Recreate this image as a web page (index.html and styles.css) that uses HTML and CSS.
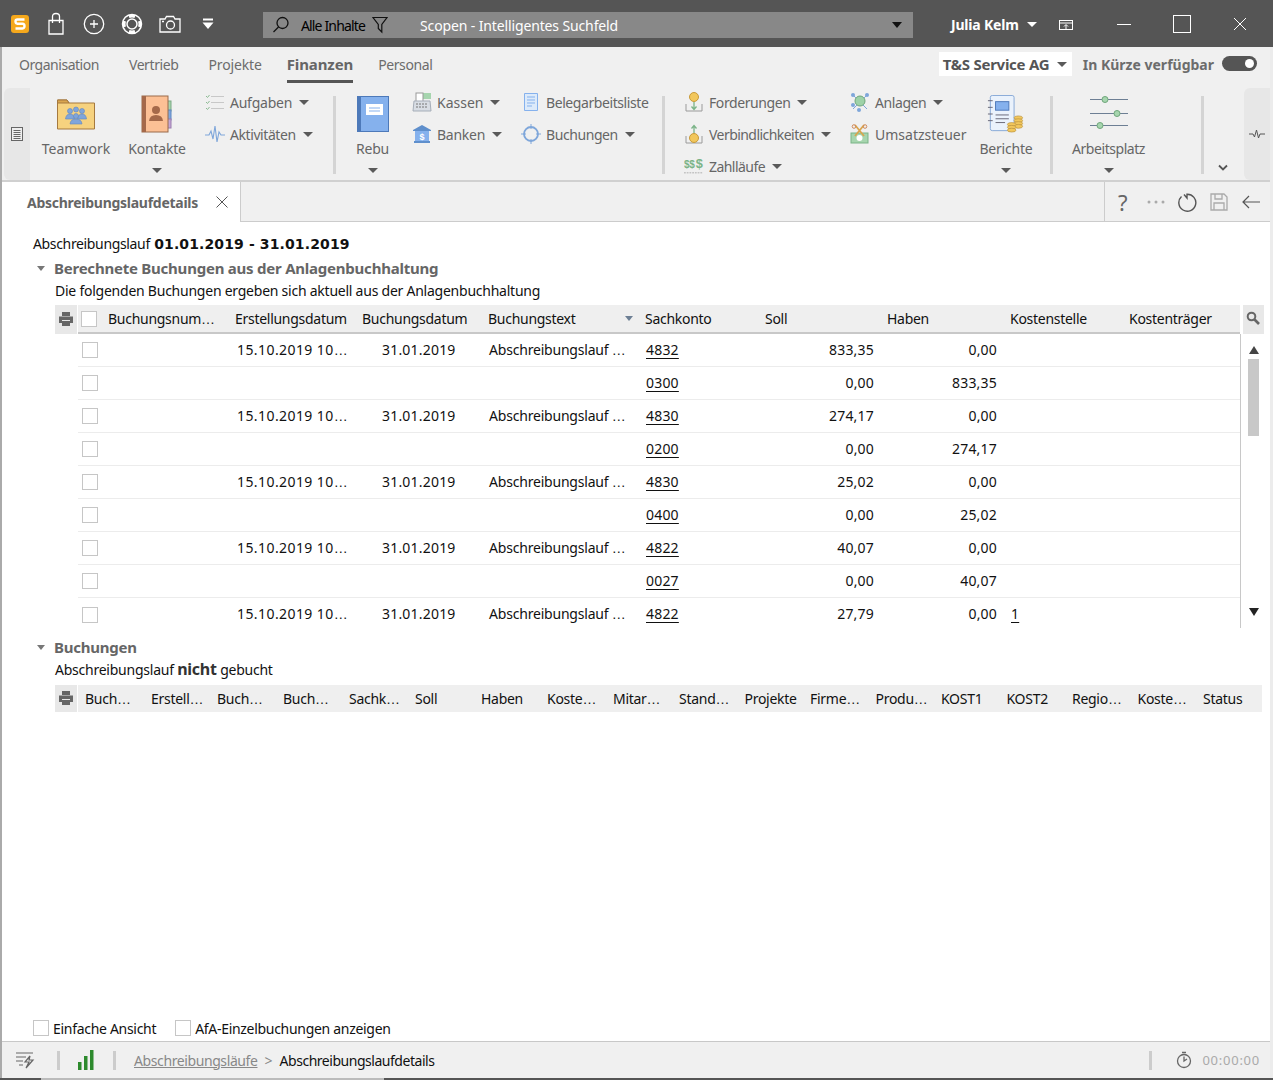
FILE: index.html
```html
<!DOCTYPE html>
<html lang="de">
<head>
<meta charset="utf-8">
<title>Abschreibungslaufdetails</title>
<link rel="stylesheet" href="styles.css">
</head>
<body>
<div class="window">
  <header class="titlebar">
    <div class="qa">
      <svg class="qa-logo" width="20" height="20" viewBox="0 0 20 20"><rect x="1" y="1" width="18" height="18" rx="3" fill="#f5a81c"/><path d="M14.5 5.5H7.5Q5.5 5.5 5.5 7.5T7.5 9.7H12.5Q14.5 9.7 14.5 12T12.500 14.500H5.500" fill="none" stroke="#fff" stroke-width="2.400"/></svg>
      <svg width="20" height="24" viewBox="0 0 20 24" fill="none" stroke="#fff" stroke-width="1.300"><path d="M3 8.500H17V22H3Z"/><path d="M6.500 11V4.500Q6.500 1.500 10 1.500T13.500 4.500V11"/></svg>
      <svg width="24" height="24" viewBox="0 0 24 24" fill="none" stroke="#fff" stroke-width="1.300"><circle cx="12" cy="12" r="9.700"/><path d="M12 8V16M8 12H16"/></svg>
      <svg width="24" height="24" viewBox="0 0 24 24" fill="none" stroke="#fff" stroke-width="1.500"><circle cx="12" cy="12" r="9.500"/><circle cx="12" cy="12" r="5"/><path d="M9 4.500Q12 3.500 15 4.500M9 19.500Q12 20.500 15 19.500M4.500 9Q3.500 12 4.500 15M19.500 9Q20.500 12 19.500 15" stroke-width="3"/></svg>
      <svg width="24" height="20" viewBox="0 0 24 20" fill="none" stroke="#fff" stroke-width="1.300"><path d="M2 5H7L8.500 2.500H15.500L17 5H22V18H2Z"/><circle cx="12.500" cy="11" r="4"/><path d="M4 7.500H6"/></svg>
      <svg width="14" height="14" viewBox="0 0 14 14" fill="#fff"><path d="M2 1.500H12V3.500H2Z"/><path d="M1.500 5.500H12.500L7 12Z"/></svg>
    </div>
    <div class="search">
      <svg class="search-icon" width="18" height="18" viewBox="0 0 18 18" fill="none" stroke="#111" stroke-width="1.300"><circle cx="10.500" cy="7" r="5.500"/><path d="M6.500 11L1.500 16"/></svg>
      <span class="search-scope">Alle Inhalte</span>
      <svg class="search-filter" width="16" height="18" viewBox="0 0 16 18" fill="none" stroke="#111" stroke-width="1.200"><path d="M1 1.500H15L9.800 8.500V16L6.300 12.500V8.500Z"/></svg>
      <span class="search-text">Scopen - Intelligentes Suchfeld</span>
      <span class="caret caret-dark search-caret"></span>
    </div>
    <div class="user">Julia Kelm <span class="caret caret-white"></span></div>
    <svg class="user-box" width="16" height="14" viewBox="0 0 16 14" fill="none" stroke="#fff"><rect x="1.500" y="2.500" width="13" height="9"/><path d="M1.500 5H14.500M8 11V7M6 8.500L8 6.500L10 8.500"/></svg>
    <div class="winbtns">
      <svg width="14" height="14" viewBox="0 0 14 14" stroke="#fff" fill="none"><path d="M0 7.500H14"/></svg>
      <svg width="18" height="18" viewBox="0 0 18 18" stroke="#fff" fill="none"><rect x="0.500" y="0.500" width="17" height="17"/></svg>
      <svg width="14" height="14" viewBox="0 0 14 14" stroke="#fff" fill="none"><path d="M1 1L13 13M13 1L1 13"/></svg>
    </div>
  </header>

  <div class="body">
    <nav class="tabs">
      <span class="tab tab-org">Organisation</span>
      <span class="tab">Vertrieb</span>
      <span class="tab tab-proj">Projekte</span>
      <span class="tab tab-active">Finanzen</span>
      <span class="tab">Personal</span>
      <span class="tabs-spacer"></span>
      <span class="company">T&amp;S Service AG <span class="caret caret-gray"></span></span>
      <span class="soon">In Kürze verfügbar</span>
      <span class="toggle"></span>
    </nav>

    <section class="ribbon">
      <div class="panel panel-left">
        <svg width="14" height="16" viewBox="0 0 14 16" fill="none" stroke="#666"><rect x="1.500" y="1.500" width="11" height="13" fill="#eee"/><path d="M3.500 4.500H10.500M3.500 6.500H10.500M3.500 8.500H10.500M3.500 10.500H10.500M3.500 12.500H10.500"/></svg>
      </div>

      <div class="big w-team">
        <svg width="38" height="32" viewBox="0 0 38 32"><path d="M0.500 2H10L12 5H37.500V31H0.500Z" fill="#f6d27f" stroke="#a5793f"/><path d="M0.500 2H10L12 5H0.500Z" fill="#d9a54e" stroke="#a5793f"/><g fill="#7fa5db" stroke="#5f86c0" stroke-width=".6"><circle cx="13" cy="13" r="2.500"/><circle cx="19" cy="11.500" r="2.500"/><circle cx="25" cy="13" r="2.500"/><path d="M8.500 21Q9 16 13 16T17.500 21Z"/><path d="M20.500 21Q21 16 25 16T29.500 21Z"/><circle cx="19" cy="18" r="2.500"/><path d="M13 26Q13.500 21 19 21T25 26Z"/></g></svg>
        <span class="big-label">Teamwork</span>
      </div>
      <div class="big w-kont">
        <svg width="32" height="36" viewBox="0 0 32 36"><rect x="26" y="5" width="4" height="10" fill="#a6d5ae" stroke="#7aa883"/><rect x="26" y="14" width="4" height="10" fill="#7fa8df" stroke="#5f86c0"/><rect x="26" y="23" width="4" height="9" fill="#c3a6d6" stroke="#9a7cae"/><rect x="1" y="0" width="26" height="36" fill="#fcc095" stroke="#9a6a4a"/><rect x="1" y="0" width="4" height="36" fill="#a5694a"/><circle cx="15" cy="14" r="4" fill="#a5694a"/><path d="M8 25Q8.500 19 15 19T22 25Z" fill="#a5694a"/></svg>
        <span class="big-label">Kontakte</span>
        <span class="caret caret-gray big-caret"></span>
      </div>
      <div class="col w-auf">
        <div class="small"><svg width="20" height="18" viewBox="0 0 20 18" fill="none" stroke="#c8c8c8"><path d="M6 3.500H19M6 9.500H19M6 15.500H19"/><path d="M1 3L2.500 4.500L4.500 2M1 9L2.500 10.500L4.500 8M1 15L2.500 16.500L4.500 14" stroke="#8dbb94"/></svg><span>Aufgaben</span><span class="caret caret-gray"></span></div>
        <div class="small"><svg width="20" height="20" viewBox="0 0 20 20" fill="none" stroke="#7ea6da" stroke-width="1.100"><path d="M0 11H4L6 7L8 15L10 2L12 18L14 8L16 11H20"/></svg><span class="tight">Aktivitäten</span><span class="caret caret-gray"></span></div>
      </div>
      <i class="sep s1"></i>
      <div class="big w-rebu">
        <svg width="32" height="36" viewBox="0 0 32 36"><rect x="0.500" y="0.500" width="31" height="35" fill="#85b1ed" stroke="#4d79b9"/><rect x="0" y="0" width="4" height="36" fill="#4d79b9"/><rect x="9" y="8" width="17" height="11" fill="#fff"/><path d="M12 12H23M12 15H23" stroke="#85b1ed"/></svg>
        <span class="big-label">Rebu</span>
        <span class="caret caret-gray big-caret"></span>
      </div>
      <div class="col w-kassen">
        <div class="small"><svg width="20" height="20" viewBox="0 0 20 20"><rect x="9" y="1" width="10" height="6" fill="#a6d5ae"/><rect x="4" y="1" width="7" height="9" fill="#fff" stroke="#999"/><path d="M2 9H18L19 19H1Z" fill="#d8dde4" stroke="#a5adb8"/><path d="M4 12H16M4 15H16" stroke="#777" stroke-dasharray="2 1"/></svg><span class="loose">Kassen</span><span class="caret caret-gray"></span></div>
        <div class="small"><svg width="20" height="20" viewBox="0 0 20 20"><path d="M1 6L10 1L19 6V7H1Z" fill="#5f8fcc"/><rect x="3" y="7" width="14" height="10" fill="#85b1ed"/><rect x="2" y="17" width="16" height="2" fill="#5f8fcc"/><text x="10" y="15.500" class="dollar">$</text></svg><span>Banken</span><span class="caret caret-gray"></span></div>
      </div>
      <div class="col w-beleg">
        <div class="small"><svg width="16" height="20" viewBox="0 0 16 20" fill="#dceafa" stroke="#85b1ed"><path d="M1.500 1.500H14.500V18.500H1.500Z"/><path d="M4 5H12M4 8H12M4 11H12M4 14H9"/></svg><span class="tight">Belegarbeitsliste</span></div>
        <div class="small"><svg width="20" height="20" viewBox="0 0 20 20" fill="none" stroke="#7ea6da"><circle cx="10" cy="10" r="7" stroke-width="1.800"/><path d="M10 0V5M10 15V20M0 10H5M15 10H20"/></svg><span class="tight">Buchungen</span><span class="caret caret-gray"></span></div>
      </div>
      <i class="sep s2"></i>
      <div class="col w-ford">
        <div class="small"><svg width="20" height="20" viewBox="0 0 20 20"><path d="M2 12V19H18V12" fill="none" stroke="#9a9a9a"/><circle cx="10" cy="5" r="4.500" fill="#f2c75c" stroke="#c89a3a"/><path d="M10 10V17M7.500 14.500L10 17.500L12.500 14.500" fill="none" stroke="#7ab387" stroke-width="1.300"/></svg><span class="tight">Forderungen</span><span class="caret caret-gray"></span></div>
        <div class="small"><svg width="20" height="20" viewBox="0 0 20 20"><path d="M2 12V19H18V12" fill="none" stroke="#9a9a9a"/><circle cx="10" cy="14" r="4.500" fill="#f2c75c" stroke="#c89a3a"/><path d="M10 9V2M7.500 4.500L10 1.500L12.500 4.500" fill="none" stroke="#7ab387" stroke-width="1.300"/></svg><span class="tighter">Verbindlichkeiten</span><span class="caret caret-gray"></span></div>
        <div class="small"><svg width="22" height="20" viewBox="0 0 22 20"><text x="0" y="12" class="dollars">$$</text><text x="13" y="12" class="dollars dollar-big">$</text><path d="M0 17.500H20" stroke="#aaa" stroke-dasharray="2 1"/></svg><span class="tighter">Zahlläufe</span><span class="caret caret-gray"></span></div>
      </div>
      <div class="col w-anl">
        <div class="small"><svg width="20" height="20" viewBox="0 0 20 20"><path d="M3 3L17 17M17 3L3 17" stroke="#7ea6da"/><circle cx="3" cy="3" r="2" fill="#7ea6da"/><circle cx="17" cy="3" r="2" fill="#7ea6da"/><circle cx="3" cy="13" r="2" fill="#7ea6da"/><circle cx="9" cy="18" r="2" fill="#7ea6da"/><circle cx="10" cy="9" r="5" fill="#9ed2a8" stroke="#6fa67b"/></svg><span class="tight">Anlagen</span><span class="caret caret-gray"></span></div>
        <div class="small"><svg width="20" height="20" viewBox="0 0 20 20"><rect x="1" y="9" width="17" height="10" fill="#a6d5ae" stroke="#7ab387"/><circle cx="9.500" cy="14" r="3" fill="#fff"/><path d="M5 1L14 12M14 1L5 12" stroke="#d9a54e" stroke-width="1.800"/><circle cx="4" cy="2.500" r="1.800" fill="none" stroke="#d08a5a"/><circle cx="15" cy="2.500" r="1.800" fill="none" stroke="#d08a5a"/></svg><span class="loose">Umsatzsteuer</span></div>
      </div>
      <div class="big w-ber">
        <svg width="38" height="40" viewBox="0 0 38 40"><rect x="2.500" y="0.500" width="25" height="37" rx="2" fill="#eaf2fc" stroke="#85a8d6"/><rect x="8" y="7" width="14" height="9" fill="#85b1ed" stroke="#4d79b9"/><path d="M0 6H5M0 13H5M0 20H5M0 27H5M8 21H22M8 25H22M8 29H18" stroke="#667"/><g fill="#f2c75c" stroke="#b8913f" stroke-width=".7"><ellipse cx="32" cy="24" rx="4.500" ry="2"/><ellipse cx="32" cy="27" rx="4.500" ry="2"/><ellipse cx="32" cy="30" rx="4.500" ry="2"/><ellipse cx="32" cy="33" rx="4.500" ry="2"/><ellipse cx="25" cy="31" rx="4.500" ry="2"/><ellipse cx="25" cy="34" rx="4.500" ry="2"/><ellipse cx="25" cy="37" rx="4.500" ry="2"/></g></svg>
        <span class="big-label">Berichte</span>
        <span class="caret caret-gray big-caret"></span>
      </div>
      <i class="sep s3"></i>
      <div class="big w-arb">
        <svg width="38" height="36" viewBox="0 0 38 36"><path d="M0 3.500H38M0 17.500H38M0 29.500H38" stroke="#6d7f94"/><circle cx="15" cy="3.500" r="3" fill="#a6d5ae" stroke="#6fa67b"/><circle cx="27" cy="17.500" r="3" fill="#a6d5ae" stroke="#6fa67b"/><circle cx="10" cy="29.500" r="3" fill="#a6d5ae" stroke="#6fa67b"/></svg>
        <span class="big-label">Arbeitsplatz</span>
        <span class="caret caret-gray big-caret"></span>
      </div>
      <i class="sep s4"></i>
      <div class="chev"><svg width="10" height="8" viewBox="0 0 10 8" fill="none" stroke="#555" stroke-width="1.800"><path d="M1 1.500L5 5.500L9 1.500"/></svg></div>
      <div class="panel panel-right">
        <svg width="16" height="10" viewBox="0 0 16 10" fill="none" stroke="#555"><path d="M0 5H4L5.500 8L7.500 1L9.500 9L11 5H16"/></svg>
      </div>
    </section>

    <div class="doc-tabs">
      <div class="doc-tab">
        <span>Abschreibungslaufdetails</span>
        <svg width="12" height="12" viewBox="0 0 12 12" stroke="#555" fill="none"><path d="M0.500 0.500L11.500 11.500M11.500 0.500L0.500 11.500"/></svg>
      </div>
      <div class="doc-rest">
        <div class="doc-tools">
          <span class="help">?</span>
          <svg width="18" height="4" viewBox="0 0 18 4" fill="#aaa"><circle cx="2" cy="2" r="1.500"/><circle cx="9" cy="2" r="1.500"/><circle cx="16" cy="2" r="1.500"/></svg>
          <svg width="20" height="20" viewBox="0 0 20 20" fill="none" stroke="#555" stroke-width="1.400"><path d="M6 2.500L9 6V2.200A8.500 8.500 0 1 1 3.500 4.500"/></svg>
          <svg width="18" height="18" viewBox="0 0 18 18" fill="none" stroke="#aaa" stroke-width="1.300"><path d="M1 1H14L17 4V17H1Z"/><path d="M5 1V6H12V1M4 17V10H14V17"/></svg>
          <svg width="18" height="14" viewBox="0 0 18 14" fill="none" stroke="#555" stroke-width="1.200"><path d="M18 7H1M7 1L1 7L7 13"/></svg>
        </div>
      </div>
    </div>

    <main class="content">
      <h1 class="run-title">Abschreibungslauf <b>01.01.2019 - 31.01.2019</b></h1>

      <h2 class="sec-title sec-first"><span class="sec-tri"></span>Berechnete Buchungen aus der Anlagenbuchhaltung</h2>
      <p class="sec-note">Die folgenden Buchungen ergeben sich aktuell aus der Anlagenbuchhaltung</p>

      <div class="grid-head">
        <div class="print-cell"><svg class="print" width="16" height="16" viewBox="0 0 16 16" fill="#666"><rect x="4" y="1" width="8" height="4"/><path d="M1 5.500H15V12H12V9H4V12H1Z"/><rect x="4" y="10" width="8" height="5"/></svg></div>
        <div class="head-main cols">
          <span><i class="check check-h"></i></span><span>Buchungsnum<em class="e">…</em></span><span>Erstellungsdatum</span><span>Buchungsdatum</span><span class="sort">Buchungstext<i class="sort-tri"></i></span><span>Sachkonto</span><span>Soll</span><span>Haben</span><span>Kostenstelle</span><span>Kostenträger</span>
        </div>
        <div class="find-cell"><svg width="14" height="14" viewBox="0 0 14 14" fill="none" stroke="#666" stroke-width="2"><circle cx="5.500" cy="5.500" r="3.800"/><path d="M8.500 8.500L13 13" stroke-width="2.600"/></svg></div>
      </div>

      <div class="grid-wrap">
        <div class="rows">
          <div class="row cols"><span><i class="check"></i></span><span></span><span class="c-d">15.10.2019 10<em class="e">…</em></span><span class="c-b">31.01.2019</span><span class="c-t">Abschreibungslauf <em class="e">…</em></span><span class="c-l"><a>4832</a></span><span class="num">833,35</span><span class="num">0,00</span><span></span><span></span></div>
          <div class="row cols"><span><i class="check"></i></span><span></span><span></span><span></span><span></span><span class="c-l"><a>0300</a></span><span class="num">0,00</span><span class="num">833,35</span><span></span><span></span></div>
          <div class="row cols"><span><i class="check"></i></span><span></span><span class="c-d">15.10.2019 10<em class="e">…</em></span><span class="c-b">31.01.2019</span><span class="c-t">Abschreibungslauf <em class="e">…</em></span><span class="c-l"><a>4830</a></span><span class="num">274,17</span><span class="num">0,00</span><span></span><span></span></div>
          <div class="row cols"><span><i class="check"></i></span><span></span><span></span><span></span><span></span><span class="c-l"><a>0200</a></span><span class="num">0,00</span><span class="num">274,17</span><span></span><span></span></div>
          <div class="row cols"><span><i class="check"></i></span><span></span><span class="c-d">15.10.2019 10<em class="e">…</em></span><span class="c-b">31.01.2019</span><span class="c-t">Abschreibungslauf <em class="e">…</em></span><span class="c-l"><a>4830</a></span><span class="num">25,02</span><span class="num">0,00</span><span></span><span></span></div>
          <div class="row cols"><span><i class="check"></i></span><span></span><span></span><span></span><span></span><span class="c-l"><a>0400</a></span><span class="num">0,00</span><span class="num">25,02</span><span></span><span></span></div>
          <div class="row cols"><span><i class="check"></i></span><span></span><span class="c-d">15.10.2019 10<em class="e">…</em></span><span class="c-b">31.01.2019</span><span class="c-t">Abschreibungslauf <em class="e">…</em></span><span class="c-l"><a>4822</a></span><span class="num">40,07</span><span class="num">0,00</span><span></span><span></span></div>
          <div class="row cols"><span><i class="check"></i></span><span></span><span></span><span></span><span></span><span class="c-l"><a>0027</a></span><span class="num">0,00</span><span class="num">40,07</span><span></span><span></span></div>
          <div class="row row-last cols"><span><i class="check"></i></span><span></span><span class="c-d">15.10.2019 10<em class="e">…</em></span><span class="c-b">31.01.2019</span><span class="c-t">Abschreibungslauf <em class="e">…</em></span><span class="c-l"><a>4822</a></span><span class="num">27,79</span><span class="num">0,00</span><span class="c-l"><a>1</a></span><span></span></div>
        </div>
        <div class="scroll">
          <i class="arrow arrow-up"></i>
          <i class="thumb"></i>
          <i class="arrow arrow-down"></i>
        </div>
      </div>

      <h2 class="sec-title sec-second"><span class="sec-tri"></span>Buchungen</h2>
      <p class="sec-note">Abschreibungslauf <b>nicht</b> gebucht</p>

      <div class="grid-head grid-head2">
        <div class="print-cell"><svg class="print" width="16" height="16" viewBox="0 0 16 16" fill="#666"><rect x="4" y="1" width="8" height="4"/><path d="M1 5.500H15V12H12V9H4V12H1Z"/><rect x="4" y="10" width="8" height="5"/></svg></div>
        <div class="head-main cols2">
          <span>Buch<em class="e">…</em></span><span>Erstell<em class="e">…</em></span><span>Buch<em class="e">…</em></span><span>Buch<em class="e">…</em></span><span>Sachk<em class="e">…</em></span><span>Soll</span><span>Haben</span><span>Koste<em class="e">…</em></span><span>Mitar<em class="e">…</em></span><span>Stand<em class="e">…</em></span><span>Projekte</span><span>Firme<em class="e">…</em></span><span>Produ<em class="e">…</em></span><span>KOST1</span><span>KOST2</span><span>Regio<em class="e">…</em></span><span>Koste<em class="e">…</em></span><span>Status</span>
        </div>
      </div>

      <div class="options">
        <label class="opt"><i class="check"></i>Einfache Ansicht</label>
        <label class="opt"><i class="check"></i>AfA-Einzelbuchungen anzeigen</label>
      </div>
    </main>

    <footer class="status">
      <svg width="20" height="18" viewBox="0 0 20 18" fill="none" stroke="#666" stroke-width="1.200"><path d="M1 2H18M1 6H11M1 10H8M4 14H8"/><path d="M15 5L10 11H14L11 17L18 9H14Z"/></svg>
      <i class="st-sep"></i>
      <svg class="st-bars" width="16" height="20" viewBox="0 0 16 20" fill="#2d8a2d"><rect x="0" y="12" width="3.500" height="8"/><rect x="6" y="6" width="3.500" height="14"/><rect x="12" y="0" width="3.500" height="20"/></svg>
      <i class="st-sep"></i>
      <a class="crumb">Abschreibungsläufe</a><span class="crumb-gt">&gt;</span><span class="crumb-cur">Abschreibungslaufdetails</span>
      <span class="st-spacer"></span>
      <i class="st-sep st-sep-r"></i>
      <svg width="16" height="18" viewBox="0 0 16 18" fill="none" stroke="#666" stroke-width="1.300"><circle cx="8" cy="10" r="6.500"/><path d="M6 1.500H10M8 5.500V10L11 8"/></svg>
      <span class="timer">00:00:00</span>
    </footer>
  </div>
  <div class="taskbar"><i class="task-light"></i></div>
</div>
</body>
</html>
```

FILE: styles.css
```css
* { box-sizing: border-box; }
html, body { margin: 0; padding: 0; }
body { font-family: "Noto Sans", "Liberation Sans", sans-serif; font-size: 14px; color: #111; background: #fff; overflow: hidden; }
.window { width: 1273px; height: 1080px; display: flex; flex-direction: column; }
i { display: block; font-style: normal; }
.e { font-family: "Liberation Sans", sans-serif; font-style: normal; letter-spacing: 0; }

.titlebar { height: 47px; background: #555; display: flex; align-items: center; flex: none; color: #fff; }
.qa { width: 263px; padding-left: 10px; display: flex; align-items: center; }
.qa svg { margin-right: 14px; }
.qa-logo { margin-right: 16px !important; }
.qa svg:nth-child(2) { margin-right: 16px; }
.qa svg:nth-child(5) { margin-right: 19px; }
.search { width: 650px; height: 26px; background: #888; display: flex; align-items: center; position: relative; margin-top: 2px; padding-top: 2px; }
.search-icon { margin-left: 9px; margin-top: -2px; }
.search-scope { color: #000; margin-left: 11px; letter-spacing: -.85px; }
.search-filter { margin-left: 7px; margin-top: -2px; }
.search-text { margin-left: 32px; color: #fff; letter-spacing: -.13px; }
.search-caret { margin-left: auto; margin-right: 11px; margin-top: -2px; }
.user { margin-left: 38px; font-weight: 700; letter-spacing: -.2px; display: flex; align-items: center; gap: 8px; width: 94px; white-space: nowrap; padding-top: 2px; }
.user-box { margin-left: 13px; margin-top: 2px; }
.winbtns { display: flex; align-items: center; margin-left: 43px; }
.winbtns svg:nth-child(2) { margin-left: 42px; }
.winbtns svg:nth-child(3) { margin-left: 42px; }

.caret { display: inline-block; width: 0; height: 0; border-left: 5px solid transparent; border-right: 5px solid transparent; border-top: 5px solid #555; }
.caret-dark { border-top-color: #111; border-left-width: 5.500px; border-right-width: 5.500px; border-top-width: 6px; }
.caret-white { border-top-color: #fff; }
.caret-gray { border-top-color: #5a5a5a; }

.body { flex: 1; min-height: 0; display: flex; flex-direction: column; border-left: 2px solid #aaa; border-right: 3px solid #ececec; }

.tabs { height: 40px; flex: none; background: #f0f0f0; display: flex; align-items: flex-start; padding-left: 17px; color: #6c6c6c; }
.tab { height: 36px; padding-top: 8px; margin-right: 30px; letter-spacing: -.4px; white-space: nowrap; }
.tab-org { letter-spacing: -.48px; }
.tab-proj { margin-right: 25px; letter-spacing: -.15px; }
.tab-active { font-size: 15px; padding-top: 7px; font-weight: 700; color: #666; border-bottom: 3px solid #555; margin-right: 25px; letter-spacing: -.1px; }
.tabs-spacer { flex: 1; }
.company { margin-top: 5px; height: 24px; width: 133px; background: #fff; font-size: 15px; font-weight: 700; color: #555; display: flex; align-items: center; padding-left: 4px; gap: 8px; letter-spacing: -.27px; white-space: nowrap; }
.soon { margin: 8px 0 0 11px; font-weight: 700; color: #6c6c6c; letter-spacing: 0; white-space: nowrap; }
.toggle { margin: 9px 13px 0 8px; width: 35px; height: 15px; border-radius: 8px; background: #555; position: relative; }
.toggle::after { content: ""; position: absolute; right: 3px; top: 3px; width: 9px; height: 9px; border-radius: 50%; background: #fff; }

.ribbon { height: 95px; flex: none; background: #f0f0f0; border-bottom: 2px solid #d0d0d0; display: flex; align-items: flex-start; color: #666; padding-left: 2px; }
.panel { width: 26px; height: 92px; background: #e7e7e7; display: flex; align-items: center; justify-content: center; flex: none; }
.panel-left { border-radius: 6px 0 0 6px; margin-top: 1px; }
.panel-right { width: 26px; border-radius: 6px 0 0 6px; margin-top: 1px; margin-left: auto; }
.big { display: flex; flex-direction: column; align-items: center; flex: none; padding-top: 8px; height: 92px; position: relative; }
.big svg { height: 38px; }
.big-label { position: absolute; top: 52px; letter-spacing: -.2px; white-space: nowrap; }
.big-caret { position: absolute; top: 81px; }
.w-team { width: 92px; margin-left: 0; }
.w-team .big-label { letter-spacing: 0; }
.w-kont { width: 70px; }
.col { flex: none; display: flex; flex-direction: column; margin-top: -1px; }
.small { height: 32px; display: flex; align-items: center; white-space: nowrap; letter-spacing: -.25px; }
.small svg { flex: none; width: 20px; margin-right: 5px; }
.small .caret { margin-left: 7px; }
.tight { letter-spacing: -.42px; }
.tighter { letter-spacing: -.55px; }
.loose { letter-spacing: 0; }
.w-auf { margin-left: 13px; width: 128px; }
.sep { width: 3px; height: 78px; background: #d4d4d4; margin-top: 9px; flex: none; }
.w-rebu { width: 71px; margin-left: 1px; }
.w-kassen { margin-left: 4px; width: 109px; }
.w-beleg { width: 141px; }
.w-ford { margin-left: 19px; width: 166px; }
.w-anl { width: 121px; }
.w-ber { width: 70px; }
.s3 { margin-left: 9px; }
.w-arb { width: 111px; margin-left: 0; }
.w-arb .big-label { letter-spacing: -.45px; }
.s4 { margin-left: 37px; }
.chev { margin: 70px 0 0 14px; }
.dollar { font: 700 9px "Liberation Sans", sans-serif; fill: #fff; text-anchor: middle; }
.dollars { font: 700 11px "Liberation Sans", sans-serif; fill: #7ab387; }
.dollar-big { font-size: 14px; }

.doc-tabs { height: 40px; flex: none; display: flex; background: #f0f0f0; }
.doc-tab { width: 239px; height: 40px; background: #fff; border-right: 1px solid #ccc; display: flex; align-items: center; padding-left: 25px; gap: 18px; font-weight: 700; color: #666; letter-spacing: -.27px; flex: none; }
.doc-rest { flex: 1; border-bottom: 1px solid #ccc; display: flex; justify-content: flex-end; align-items: center; }
.doc-tools { height: 39px; width: 166px; border-left: 1px solid #ccc; display: flex; align-items: center; padding-left: 13px; gap: 13px; }
.help { font-size: 22px; color: #666; font-weight: 400; line-height: 1; width: 14px; margin-right: 2px; }
.doc-tools svg:nth-child(3) { margin-right: -1px; }
.doc-tools svg:nth-child(4) { margin-right: 1px; }

.content { flex: 1; min-height: 0; background: #fff; padding: 11px 0 0 31px; display: flex; flex-direction: column; }
.run-title { margin: 0; font-size: 14px; font-weight: 400; line-height: 22px; letter-spacing: -.35px; }
.run-title b { font-size: 14px; font-family: "DejaVu Sans", sans-serif; letter-spacing: .12px; margin-left: 1px; }
.sec-title { font-size: 15px; font-weight: 700; color: #666; line-height: 20px; display: flex; align-items: center; letter-spacing: -.23px; }
.sec-first { margin: 3px 0 3px 4px; }
.sec-second { margin: 9px 0 2px 4px; }
.sec-tri { width: 0; height: 0; border-left: 4px solid transparent; border-right: 4px solid transparent; border-top: 5px solid #777; margin-right: 9px; }
.sec-note { margin: 0 0 0 22px; line-height: 20px; letter-spacing: -.24px; }
.sec-note b { font-size: 16px; color: #333; }

.grid-head { display: flex; height: 29px; margin: 4px 0 0 22px; }
.print-cell { width: 22px; background: #e8e8e8; display: flex; align-items: center; justify-content: center; flex: none; }
.print { margin-top: -2px; }
.head-main { margin-left: 1px; background: #efefef; align-items: center; letter-spacing: -.28px; }
.head-main.cols { width: 1162px; border-bottom: 2px solid #c8c8c8; }
.head-main.cols2 { width: 1184px; }
.find-cell { margin-left: 3px; width: 21px; background: #e8e8e8; display: flex; align-items: center; justify-content: center; }
.find-cell svg { margin: -3px 1px 0 0; }
.grid-head2 { margin-top: 5px; height: 27px; }
.cols { display: grid; grid-template-columns: 30px 127px 127px 126px 157px 120px 122px 123px 119px 111px; }
.cols2 { display: grid; grid-template-columns: repeat(9, 66px) repeat(8, 65.500px) 1fr; padding-left: 7px; }
.cols > span, .cols2 > span { white-space: nowrap; overflow: hidden; }
.check { width: 16px; height: 16px; border: 1px solid #c6c6c6; background: #fff; flex: none; }
.check-h { margin-left: 3px; }
.row .check { margin-left: 4px; margin-top: 2px; }
.sort { position: relative; }
.sort-tri { position: absolute; right: 12px; top: 7px; width: 0; height: 0; border-left: 4px solid transparent; border-right: 4px solid transparent; border-top: 5px solid #6d7f94; }

.grid-wrap { display: flex; height: 294px; margin-left: 45px; }
.rows { width: 1163px; border-right: 1px solid #c8c8c8; overflow: hidden; }
.row { height: 33px; width: 1162px; padding-bottom: 2px; border-bottom: 1px solid #ececec; align-items: center; letter-spacing: -.2px; }
.row-last { border-bottom: 0; }
.c-b, .num, .c-l { letter-spacing: .2px; }
.c-d { padding-left: 2px; letter-spacing: .42px; }
.c-b { padding-left: 20px; }
.c-t { padding-left: 1px; }
.c-l { padding-left: 1px; }
.c-l a { color: #111; text-decoration: underline; text-underline-offset: 3px; }
.num { text-align: right; padding-right: 13px; }

.scroll { width: 21px; margin-left: 2px; position: relative; display: flex; flex-direction: column; align-items: center; padding-top: 12px; }
.arrow { width: 0; height: 0; border-left: 5px solid transparent; border-right: 5px solid transparent; flex: none; }
.arrow-up { border-bottom: 8px solid #444; }
.arrow-down { border-top: 8px solid #222; margin-top: 172px; }
.thumb { width: 11px; height: 77px; background: #c8c8c8; margin-top: 5px; flex: none; }

.options { margin-top: auto; display: flex; gap: 19px; height: 26px; align-items: center; }
.opt { display: flex; align-items: center; gap: 4px; letter-spacing: -.3px; }

.status { height: 37px; flex: none; background: #f0f0f0; border-top: 1px solid #c8c8c8; display: flex; align-items: center; padding-left: 13px; padding-right: 10px; }
.st-sep { width: 3px; height: 19px; background: #ccc; margin-left: 22px; margin-right: 18px; flex: none; }
.st-bars { margin-right: 0; }
.st-bars + .st-sep { margin-left: 19px; margin-right: 18px; }
.crumb { color: #888; text-decoration: underline; letter-spacing: -.4px; }
.crumb-gt { color: #888; margin: 0 7px; }
.crumb-cur { color: #111; letter-spacing: -.47px; }
.st-spacer { flex: 1; }
.st-sep-r { margin-right: 24px; }
.timer { color: #aaa; margin-left: 10px; font-size: 13px; letter-spacing: .75px; }

.taskbar { height: 2px; background: #555; flex: none; padding-left: 41px; }
.task-light { width: 343px; height: 2px; background: #bbb; }
```
